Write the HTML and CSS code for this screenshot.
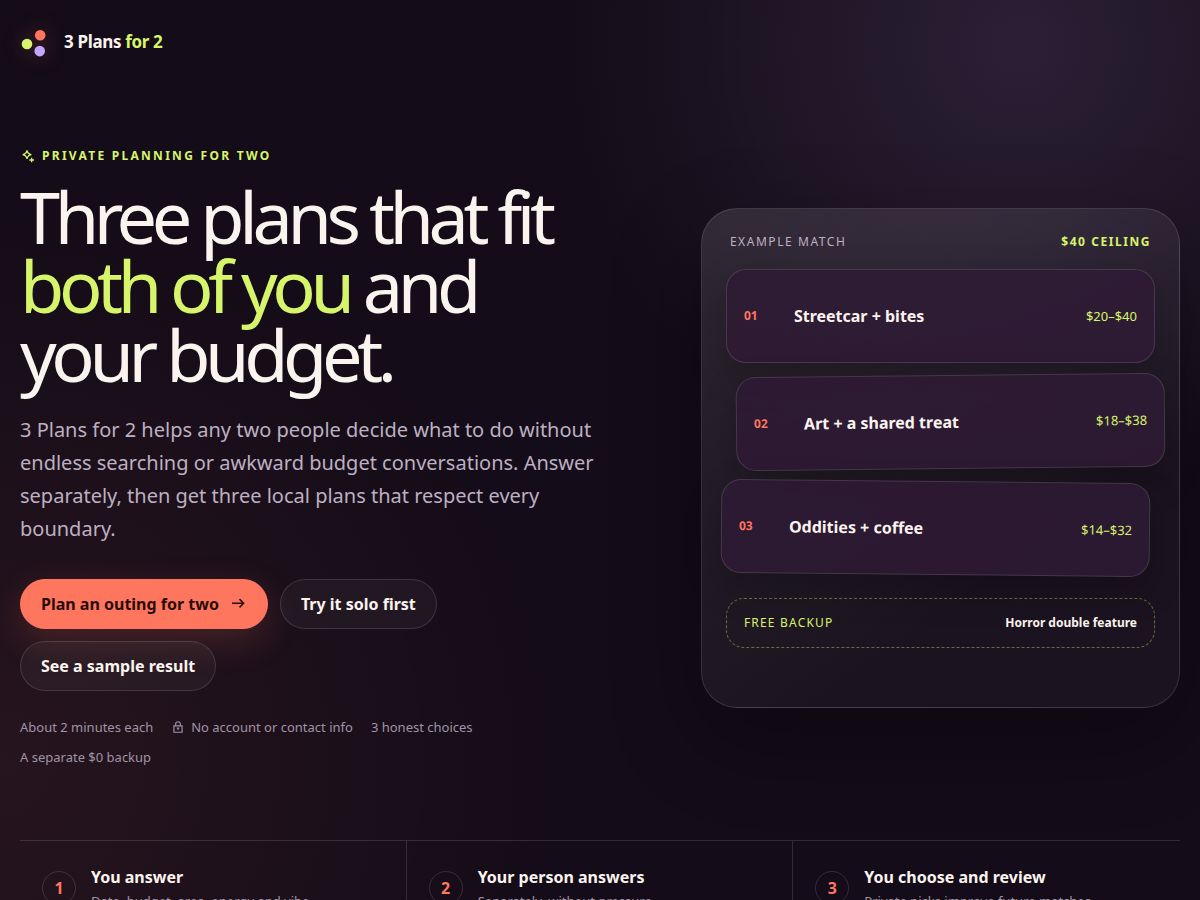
FILE: index.html
```
<!DOCTYPE html>
<html lang="en">
<head>
    <meta charset="UTF-8">
    <meta name="viewport" content="width=device-width, initial-scale=1.0">
    <title>3 Plans for 2</title>
    <link rel="stylesheet" href="styles.css">
</head>
<body>
    <div class="page">
        <header class="site-header">
            <a class="brand" href="#">
                <svg class="brand-mark" viewBox="0 0 32 32" aria-hidden="true">
                    <circle cx="7" cy="18" r="5.3" fill="#d7f56a"/>
                    <circle cx="20.2" cy="9.3" r="5.3" fill="#ff765f"/>
                    <circle cx="19.7" cy="25.1" r="5.3" fill="#c3a5ff"/>
                </svg>
                <span>3 Plans <span class="accent">for 2</span></span>
            </a>
        </header>

        <main>
            <section class="hero">
                <div class="hero-copy">
                    <p class="eyebrow">
                        <svg class="icon" viewBox="0 0 24 24" aria-hidden="true"><path d="M10.500 3.500Q11.500 9 17 10Q11.500 11 10.500 16.500Q9.500 11 4 10Q9.500 9 10.500 3.500z"/><path d="M17.500 14.500v7M14 18h7"/></svg>
                        Private planning for two
                    </p>
                    <h1>Three plans that fit <span class="accent">both of you</span> and your budget.</h1>
                    <p class="lede">3 Plans for 2 helps any two people decide what to do without endless searching or awkward budget conversations. Answer separately, then get three local plans that respect every boundary.</p>
                    <div class="actions">
                        <a class="btn btn-primary" href="#">Plan an outing for two
                            <svg class="icon" viewBox="0 0 24 24" aria-hidden="true"><path d="M4 11h15M14 5.500l5.500 5.500-5.500 5.500"/></svg>
                        </a>
                        <a class="btn" href="#">Try it solo first</a>
                        <a class="btn" href="#">See a sample result</a>
                    </div>
                    <ul class="trust">
                        <li>About 2 minutes each</li>
                        <li>
                            <svg class="icon" viewBox="0 0 24 24" aria-hidden="true"><path d="M5 10h14v11H5zM8 10V7a4 4 0 0 1 8 0v3M12 14v3M10 14h4"/></svg>
                            No account or contact info
                        </li>
                        <li>3 honest choices</li>
                        <li>A separate $0 backup</li>
                    </ul>
                </div>

                <div class="preview">
                    <div class="preview-head">
                        <span>Example match</span>
                        <strong>$40 ceiling</strong>
                    </div>
                    <div class="plans">
                        <article class="plan">
                            <span class="plan-num">01</span>
                            <strong>Streetcar + bites</strong>
                            <span class="plan-price">$20–$40</span>
                        </article>
                        <article class="plan plan-right">
                            <span class="plan-num">02</span>
                            <strong>Art + a shared treat</strong>
                            <span class="plan-price">$18–$38</span>
                        </article>
                        <article class="plan plan-left">
                            <span class="plan-num">03</span>
                            <strong>Oddities + coffee</strong>
                            <span class="plan-price">$14–$32</span>
                        </article>
                    </div>
                    <div class="backup">
                        <span>Free backup</span>
                        <strong>Horror double feature</strong>
                    </div>
                </div>
            </section>

            <section class="steps">
                <div class="step">
                    <span class="step-num">1</span>
                    <div>
                        <h2>You answer</h2>
                        <p>Date, budget, area, energy and vibe.</p>
                    </div>
                </div>
                <div class="step">
                    <span class="step-num">2</span>
                    <div>
                        <h2>Your person answers</h2>
                        <p>Separately, without pressure.</p>
                    </div>
                </div>
                <div class="step">
                    <span class="step-num">3</span>
                    <div>
                        <h2>You choose and review</h2>
                        <p>Private picks improve future matches.</p>
                    </div>
                </div>
            </section>
        </main>
    </div>
</body>
</html>
```
FILE: styles.css
```
:root {
    --ink: #140c18;
    --cream: #fbf4ee;
    --muted: #bdb0c2;
    --lime: #d7f56a;
    --coral: #ff765f;
    --line: rgba(255, 255, 255, 0.13);
}

* {
    box-sizing: border-box;
}

body {
    margin: 0;
    min-height: 100vh;
    font-family: "Noto Sans", sans-serif;
    font-size: 16px;
    line-height: 24px;
    color: var(--cream);
    background:
        radial-gradient(circle at 85% 5%, rgba(195, 165, 255, 0.13), transparent 460px),
        radial-gradient(circle at 0 85%, rgba(255, 118, 95, 0.08), transparent 560px),
        var(--ink);
    background-attachment: fixed;
    overflow-x: hidden;
}

h1,
h2,
p,
ul {
    margin: 0;
    padding: 0;
}

a {
    color: inherit;
    text-decoration: none;
}

.page {
    max-width: 1200px;
    margin: 0 auto;
    padding: 0 20px;
}

.accent {
    color: var(--lime);
}

.icon {
    width: 16px;
    height: 16px;
    flex: none;
    fill: none;
    stroke: currentColor;
    stroke-width: 2;
}

/* header */
.site-header {
    display: flex;
    align-items: center;
    height: 84px;
}

.brand {
    display: flex;
    align-items: center;
    gap: 12px;
    font-size: 17px;
    font-weight: 700;
    letter-spacing: -0.02em;
}

.brand-mark {
    width: 32px;
    height: 32px;
    overflow: visible;
    filter: drop-shadow(0 0 10px rgba(255, 118, 95, 0.3));
}

/* hero */
.hero {
    display: grid;
    grid-template-columns: 5fr 4fr;
    gap: 82px;
    align-items: center;
    padding: 60px 0 68px;
}

.eyebrow {
    display: flex;
    align-items: center;
    gap: 6px;
    color: var(--lime);
    font-size: 12px;
    font-weight: 700;
    letter-spacing: 0.19em;
    text-transform: uppercase;
}

h1 {
    margin-top: 14px;
    font-size: 72px;
    font-weight: 400;
    line-height: 69px;
    letter-spacing: -0.075em;
}

.lede {
    max-width: 590px;
    margin-top: 24px;
    color: var(--muted);
    font-size: 20px;
    line-height: 33px;
}

.actions {
    display: flex;
    flex-wrap: wrap;
    gap: 12px;
    margin-top: 34px;
}

.btn {
    display: inline-flex;
    align-items: center;
    gap: 10px;
    min-height: 50px;
    padding: 0 20px;
    border: 1px solid var(--line);
    border-radius: 999px;
    background: rgba(255, 255, 255, 0.04);
    font-weight: 700;
}

.btn .icon {
    width: 18px;
    height: 18px;
}

.btn-primary {
    border-color: var(--coral);
    background: var(--coral);
    color: #2a0d0b;
    box-shadow: 0 12px 36px rgba(255, 118, 95, 0.18);
}

.trust {
    display: flex;
    flex-wrap: wrap;
    gap: 10px 18px;
    max-width: 580px;
    margin-top: 26px;
    padding-bottom: 5px;
    color: #a093a6;
    font-size: 13px;
    line-height: 20px;
    list-style: none;
}

.trust li {
    display: flex;
    align-items: center;
    gap: 6px;
}

.trust .icon {
    width: 14px;
    height: 14px;
}

/* example card */
.preview {
    min-height: 500px;
    padding: 24px;
    border: 1px solid var(--line);
    border-radius: 36px;
    background: linear-gradient(145deg, rgba(255, 255, 255, 0.11), rgba(255, 255, 255, 0.03) 70%);
    box-shadow: 0 30px 90px rgba(0, 0, 0, 0.32);
}

.preview-head {
    display: flex;
    justify-content: space-between;
    padding: 0 4px;
    margin-bottom: 18px;
    color: var(--muted);
    font-size: 12px;
    line-height: 18px;
    letter-spacing: 0.13em;
    text-transform: uppercase;
}

.preview-head strong {
    color: var(--lime);
}

.plans {
    display: grid;
    gap: 12px;
}

.plan {
    display: grid;
    grid-template-columns: 40px 1fr auto;
    gap: 10px;
    align-items: center;
    min-height: 94px;
    padding: 0 17px;
    border: 1px solid var(--line);
    border-radius: 20px;
    background: rgba(46, 26, 52, 0.86);
    box-shadow: 0 14px 36px rgba(0, 0, 0, 0.22);
}

.plan-right {
    transform: translateX(10px) rotate(-0.6deg);
}

.plan-left {
    transform: translateX(-5px) rotate(0.6deg);
}

.plan-num {
    color: var(--coral);
    font-size: 12px;
    font-weight: 700;
}

.plan-price {
    color: var(--lime);
    font-size: 13px;
}

.backup {
    display: flex;
    align-items: center;
    justify-content: space-between;
    min-height: 50px;
    margin-top: 23px;
    padding: 0 17px;
    border: 1px dashed rgba(215, 245, 106, 0.4);
    border-radius: 18px;
    font-size: 12px;
}

.backup span {
    color: var(--lime);
    letter-spacing: 0.1em;
    text-transform: uppercase;
}

/* steps */
.steps {
    display: grid;
    grid-template-columns: repeat(3, 1fr);
    border-top: 1px solid var(--line);
}

.step {
    display: flex;
    align-items: center;
    gap: 15px;
    padding: 24px 22px;
    border-right: 1px solid var(--line);
}

.step:last-child {
    border-right: none;
}

.step-num {
    display: grid;
    place-items: center;
    width: 34px;
    height: 34px;
    flex: none;
    border: 1px solid var(--line);
    border-radius: 50%;
    color: var(--coral);
    font-weight: 700;
}

.step h2 {
    font-size: 16px;
    line-height: 24px;
}

.step p {
    margin-top: 2px;
    color: #a093a6;
    font-size: 13px;
    line-height: 20px;
}
```
